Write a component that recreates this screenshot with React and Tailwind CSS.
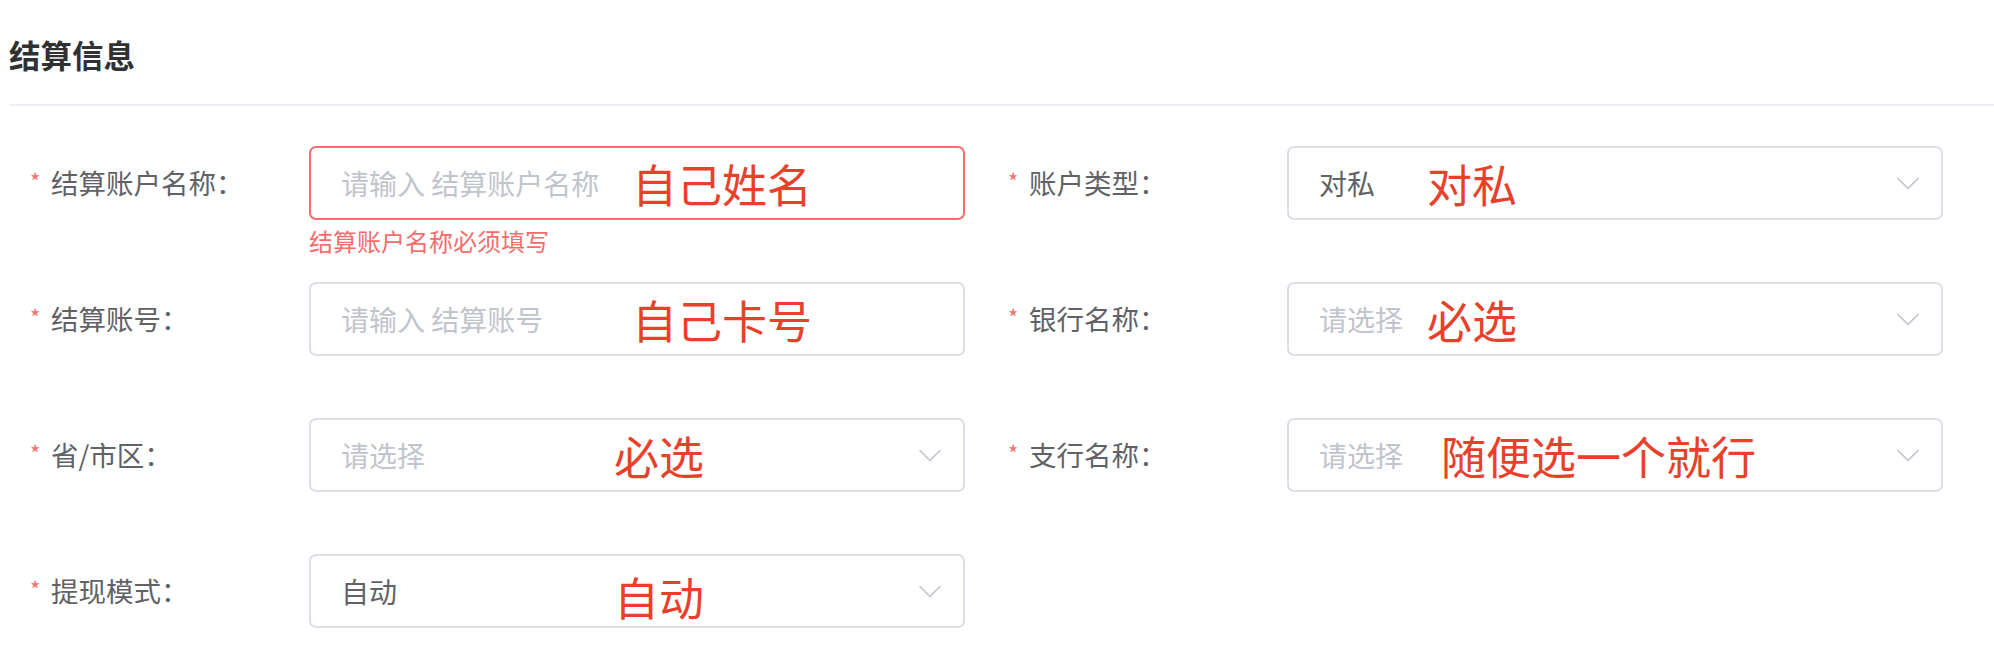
import React from "react";

function Chevron() {
  return (
    <svg width="22" height="13" viewBox="0 0 22 13" fill="none" className="shrink-0">
      <path d="M1 1.5 L11 11.5 L21 1.5" stroke="#c0c4cc" strokeWidth="1.6" strokeLinecap="round" strokeLinejoin="round" />
    </svg>
  );
}

function Note({ children, left, extra = "" }) {
  return (
    <span
      className={`absolute top-1/2 -translate-y-1/2 text-[45px] leading-none text-[#e8402b] whitespace-nowrap ${left} ${extra}`}
    >
      {children}
    </span>
  );
}

function Item({ label, children }) {
  return (
    <div className="flex items-center h-[74px]">
      <div className="w-[279px] shrink-0 flex items-center text-[27.5px] text-[#606266] leading-none">
        <span className="w-[21px] text-[22px] text-[#f56c6c] -mt-[6px]">*</span>
        <span>{label}：</span>
      </div>
      {children}
    </div>
  );
}

export default function App() {
  return (
    <div className="w-[1994px] h-[666px] bg-white font-['Noto_Sans_CJK_SC','Noto_Sans',sans-serif] overflow-hidden">
      <div className="pl-[9px]">
        <div className="h-[104px] flex items-center pt-[6px]">
          <h2 className="text-[31.5px] font-bold text-[#303133] leading-none">结算信息</h2>
        </div>
        <div className="h-[2px] bg-[#ebeef5]" />
      </div>

      <div className="pl-[30px] pt-[40px] grid grid-cols-[935px_935px] gap-x-[43px] gap-y-[62px]">
        <Item label="结算账户名称">
          <div className="relative w-[656px] h-[74px] border-2 border-[#f56c6c] rounded-[7px] flex items-center pl-[30px] text-[28px] text-[#c0c4cc]">
            请输入 结算账户名称
            <Note left="left-[321px]">自己姓名</Note>
            <div className="absolute left-[-2px] top-full mt-[11px] text-[24px] leading-none text-[#f56c6c] whitespace-nowrap">
              结算账户名称必须填写
            </div>
          </div>
        </Item>

        <Item label="账户类型">
          <div className="relative w-[656px] h-[74px] border-2 border-[#dcdfe6] rounded-[7px] flex items-center justify-between pl-[30px] pr-[22px] text-[28px] text-[#606266]">
            <span>对私</span>
            <Note left="left-[138px]">对私</Note>
            <Chevron />
          </div>
        </Item>

        <Item label="结算账号">
          <div className="relative w-[656px] h-[74px] border-2 border-[#dcdfe6] rounded-[7px] flex items-center pl-[30px] text-[28px] text-[#c0c4cc]">
            请输入 结算账号
            <Note left="left-[321px]">自己卡号</Note>
          </div>
        </Item>

        <Item label="银行名称">
          <div className="relative w-[656px] h-[74px] border-2 border-[#dcdfe6] rounded-[7px] flex items-center justify-between pl-[30px] pr-[22px] text-[28px] text-[#c0c4cc]">
            <span>请选择</span>
            <Note left="left-[138px]">必选</Note>
            <Chevron />
          </div>
        </Item>

        <Item label="省/市区">
          <div className="relative w-[656px] h-[74px] border-2 border-[#dcdfe6] rounded-[7px] flex items-center justify-between pl-[30px] pr-[22px] text-[28px] text-[#c0c4cc]">
            <span>请选择</span>
            <Note left="left-[303px]">必选</Note>
            <Chevron />
          </div>
        </Item>

        <Item label="支行名称">
          <div className="relative w-[656px] h-[74px] border-2 border-[#dcdfe6] rounded-[7px] flex items-center justify-between pl-[30px] pr-[22px] text-[28px] text-[#c0c4cc]">
            <span>请选择</span>
            <Note left="left-[152px]">随便选一个就行</Note>
            <Chevron />
          </div>
        </Item>

        <Item label="提现模式">
          <div className="relative w-[656px] h-[74px] border-2 border-[#dcdfe6] rounded-[7px] flex items-center justify-between pl-[30px] pr-[22px] text-[28px] text-[#606266]">
            <span>自动</span>
            <Note left="left-[303px]" extra="mt-[5px]">自动</Note>
            <Chevron />
          </div>
        </Item>
      </div>
    </div>
  );
}
